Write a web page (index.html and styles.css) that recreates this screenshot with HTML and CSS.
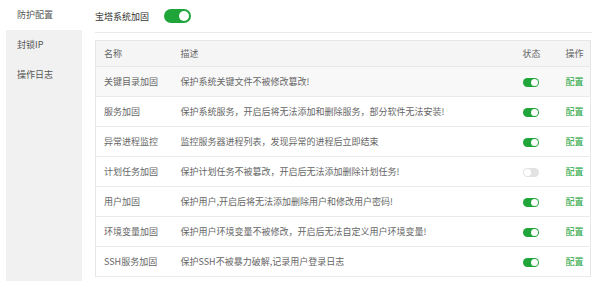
FILE: index.html
```html
<!DOCTYPE html>
<html lang="zh-CN">
<head>
<meta charset="utf-8">
<link rel="stylesheet" href="styles.css">
</head>
<body>
<div class="layout">
  <nav class="sidebar">
    <div class="nav-item active">防护配置</div>
    <div class="nav-item">封锁IP</div>
    <div class="nav-item">操作日志</div>
  </nav>
  <main class="main">
    <div class="head">
      <span class="head-title">宝塔系统加固</span>
      <span class="switch big on"><span class="knob"></span></span>
    </div>
    <table class="grid">
      <colgroup>
        <col class="c-name"><col class="c-desc"><col class="c-state"><col class="c-op">
      </colgroup>
      <thead>
        <tr><th>名称</th><th>描述</th><th>状态</th><th>操作</th></tr>
      </thead>
      <tbody>
        <tr class="hover"><td>关键目录加固</td><td>保护系统关键文件不被修改篡改!</td><td><span class="switch on"><span class="knob"></span></span></td><td><a class="op">配置</a></td></tr>
        <tr><td>服务加固</td><td>保护系统服务，开启后将无法添加和删除服务，部分软件无法安装!</td><td><span class="switch on"><span class="knob"></span></span></td><td><a class="op">配置</a></td></tr>
        <tr><td>异常进程监控</td><td>监控服务器进程列表，发现异常的进程后立即结束</td><td><span class="switch on"><span class="knob"></span></span></td><td><a class="op">配置</a></td></tr>
        <tr><td>计划任务加固</td><td>保护计划任务不被篡改，开启后无法添加删除计划任务!</td><td><span class="switch"><span class="knob"></span></span></td><td><a class="op">配置</a></td></tr>
        <tr><td>用户加固</td><td>保护用户,开启后将无法添加删除用户和修改用户密码!</td><td><span class="switch on"><span class="knob"></span></span></td><td><a class="op">配置</a></td></tr>
        <tr><td>环境变量加固</td><td>保护用户环境变量不被修改，开启后无法自定义用户环境变量!</td><td><span class="switch on"><span class="knob"></span></span></td><td><a class="op">配置</a></td></tr>
        <tr><td>SSH服务加固</td><td>保护SSH不被暴力破解,记录用户登录日志</td><td><span class="switch on"><span class="knob"></span></span></td><td><a class="op">配置</a></td></tr>
      </tbody>
    </table>
  </main>
</div>
</body>
</html>
```
FILE: styles.css
```css
html, body {
  margin: 0;
  padding: 0;
  background: #fff;
}
body {
  font-family: "Noto Sans CJK SC", "Noto Sans", sans-serif;
  font-size: 9px;
  color: #666;
}
.layout {
  display: flex;
  height: 281px;
}
.sidebar {
  width: 76px;
  margin-left: 6px;
  background: #f1f1f1;
  display: flex;
  flex-direction: column;
}
.nav-item {
  height: 30px;
  line-height: 30px;
  padding-left: 11px;
  color: #555;
}
.nav-item.active {
  background: #fff;
}
.main {
  margin-left: 13px;
  width: 497px;
}
.head {
  height: 32px;
  display: flex;
  align-items: center;
  border-bottom: 1px solid #ebebeb;
}
.head-title {
  color: #333;
  font-size: 9px;
}
.switch {
  position: relative;
  display: inline-block;
  width: 16px;
  height: 9px;
  border-radius: 5px;
  background: #e2e2e2;
  vertical-align: middle;
}
.switch.on {
  background: #20a53a;
}
.switch .knob {
  position: absolute;
  top: 1px;
  left: 1px;
  width: 7px;
  height: 7px;
  border-radius: 50%;
  background: #fff;
}
.switch.on .knob {
  left: auto;
  right: 1px;
}
.switch.big {
  width: 27px;
  height: 14px;
  border-radius: 7px;
  margin-left: 15px;
}
.switch.big .knob {
  top: 2px;
  width: 10px;
  height: 10px;
}
.switch.big.on .knob {
  right: 2px;
}
.grid {
  margin-top: 7px;
  width: 495px;
  border-collapse: collapse;
  table-layout: fixed;
  border: 1px solid #e6e6e6;
}
.c-name { width: 77px; }
.c-desc { width: 342px; }
.c-state { width: 43px; }
.c-op { width: 33px; }
.grid th {
  height: 25px;
  background: #f5f5f5;
  font-weight: normal;
  text-align: left;
  color: #666;
  padding: 0 0 0 8px;
  border-bottom: 1px solid #e8e8e8;
}
.grid th:nth-child(3), .grid td:nth-child(3) {
  padding-left: 8px;
}
.grid th:nth-child(4), .grid td:nth-child(4) {
  padding-left: 8px;
}
.grid td {
  height: 29px;
  padding: 0 0 0 8px;
  border-bottom: 1px solid #ebebeb;
  white-space: nowrap;
  color: #666;
}
.grid tr.hover td {
  background: #f8f8f8;
}
.op {
  color: #20a53a;
  text-decoration: none;
}
```
